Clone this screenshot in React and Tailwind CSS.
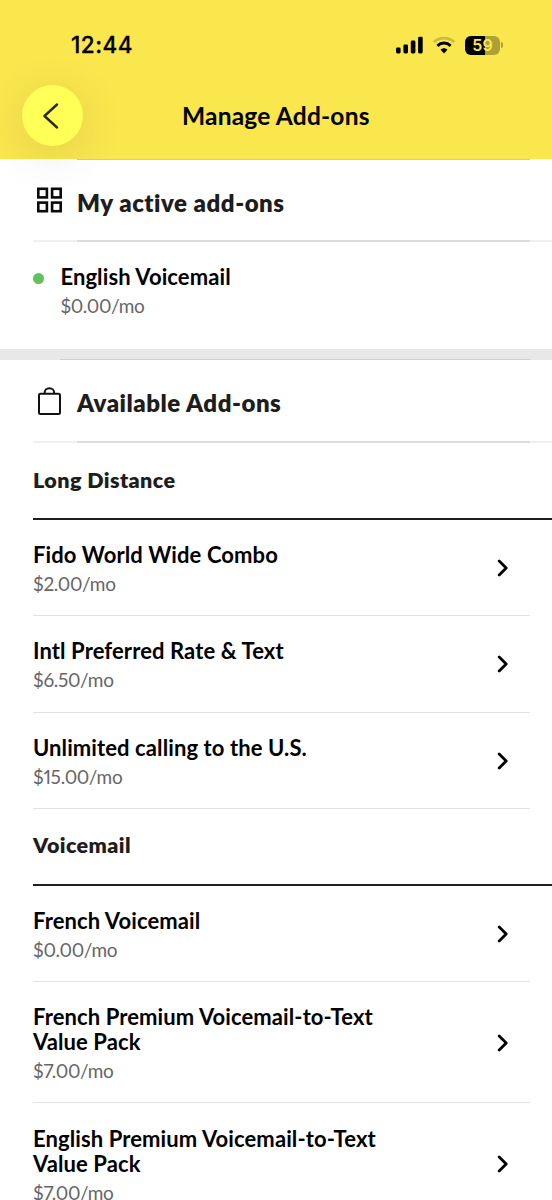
import clsx from 'clsx'

const addonGroups = [
  {
    title: 'Long Distance',
    items: [
      { name: 'Fido World Wide Combo', price: '$2.00/mo' },
      { name: 'Intl Preferred Rate & Text', price: '$6.50/mo' },
      { name: 'Unlimited calling to the U.S.', price: '$15.00/mo' },
    ],
  },
  {
    title: 'Voicemail',
    items: [
      { name: 'French Voicemail', price: '$0.00/mo' },
      { name: 'French Premium Voicemail-to-Text Value Pack', price: '$7.00/mo' },
      { name: 'English Premium Voicemail-to-Text Value Pack', price: '$7.00/mo' },
    ],
  },
]

const StatusBar = () => (
  <div className="flex h-[85px] items-start justify-between pt-[30px] pr-[49px] pl-[71px]">
    <span className="font-['Inter'] text-[22.5px] leading-[30px] font-medium tracking-[0.5px] text-black [-webkit-text-stroke:0.3px_black]">
      12:44
    </span>
    <div className="flex h-[30px] items-center">
      {/* Signal */}
      <svg width="28" height="18" viewBox="0 0 28 18">
        <rect x="1" y="11.5" width="4.6" height="6" rx="1.4" />
        <rect x="8.4" y="8.5" width="4.6" height="9" rx="1.4" />
        <rect x="15.8" y="4.5" width="4.6" height="13" rx="1.4" />
        <rect x="23.1" y="0.7" width="4.6" height="16.8" rx="1.4" />
      </svg>
      {/* Wifi */}
      <svg className="ml-[9px]" width="24" height="18" viewBox="0 0 24 18">
        <path d="M1.8 6C7.5 0.8 16.5 0.8 22.2 6" fill="none" stroke="#c9bc42" strokeWidth="2.8" />
        <path d="M5.4 9.8C9.2 6.2 14.8 6.2 18.6 9.8" fill="none" stroke="#000" strokeWidth="3" />
        <path d="M12 17.4L8.6 13.8C10.4 11.8 13.6 11.8 15.4 13.8Z" />
      </svg>
      {/* Battery */}
      <div className="relative ml-[9px] flex h-[19px] w-[35px] items-center justify-center overflow-hidden rounded-[6px] bg-[#ada036]">
        <div className="absolute inset-y-0 left-0 w-[20px] bg-black" />
        <span className="relative font-['Inter'] text-[16px] leading-none font-semibold text-[#fae64d]">59</span>
      </div>
      <div className="ml-px h-[6px] w-[2px] rounded-r-full bg-[#ada036]" />
    </div>
  </div>
)

const Header = () => (
  <header className="relative h-[159px] bg-[#fae64d]">
    <StatusBar />
    <div className="flex items-center pl-[22px]">
      <button className="flex h-[61px] w-[61px] items-center justify-center rounded-full bg-[#ffff57] shadow-[0_8px_44px_rgba(70,60,60,0.13)]">
        <svg width="16" height="26" viewBox="0 0 16 26" fill="none" stroke="#292a0e" strokeWidth="2.4" strokeLinecap="round" strokeLinejoin="round" className="-ml-[3px]">
          <path d="M14 1.5L1.5 13L14 24.5" />
        </svg>
      </button>
      <h1 className="ml-[99px] text-[24.5px] leading-[30px] font-bold tracking-[0.2px] text-black">Manage Add-ons</h1>
    </div>
  </header>
)

const SectionHeader = ({ icon, title, className }) => (
  <div className={clsx('flex items-start pt-[27px] pl-[33px]', className)}>
    <div className="w-[44px]">{icon}</div>
    <h2 className="text-[24px] leading-[32px] font-extrabold tracking-[0.52px] text-[#1d1d1d]">{title}</h2>
  </div>
)

// Two-tone divider: light from the margin, darker under the text
const Divider = () => (
  <div className="ml-[33px] h-[2px] bg-[#f0f0f0] pr-[22px] pl-[44px]">
    <div className="h-full bg-[#dcdcdc]" />
  </div>
)

const GridIcon = () => (
  <svg className="ml-[4px]" width="25" height="26" viewBox="0 0 25 26" fill="none" stroke="#0a0a0a" strokeWidth="2.6">
    <rect x="1.3" y="1.8" width="8.6" height="8.6" />
    <rect x="15.1" y="1.8" width="8.6" height="8.6" />
    <rect x="1.3" y="15.6" width="8.6" height="8.6" />
    <rect x="15.1" y="15.6" width="8.6" height="8.6" />
  </svg>
)

const BagIcon = () => (
  <svg className="ml-[5px]" width="23" height="28" viewBox="0 0 23 28" fill="none" stroke="#111" strokeWidth="2">
    <rect x="1" y="6.8" width="21" height="20.1" rx="1.5" />
    <path d="M6.7 6.8V5.6C6.7 3.2 8.6 1.3 11.4 1.3S16.1 3.2 16.1 5.6V6.8" />
  </svg>
)

const AddonText = ({ name, price }) => (
  <div>
    <p className="text-[22px] leading-[25px] font-bold tracking-[0.1px] text-black">{name}</p>
    <p className="mt-[4px] text-[19px] leading-[25px] tracking-[-0.3px] text-[#666] proportional-nums">{price}</p>
  </div>
)

const AddonRow = ({ item, tall }) => (
  <button
    className={clsx(
      'mr-[22px] ml-[33px] flex items-center justify-between border-b border-[#e2e2e2] pr-[22px] text-left',
      tall ? 'h-[121.3px]' : 'h-[96.3px]'
    )}
  >
    <div className="w-[360px] pt-[3px]">
      <AddonText name={item.name} price={item.price} />
    </div>
    <svg className="mt-px" width="11" height="18" viewBox="0 0 11 18" fill="none" stroke="#000" strokeWidth="2.8" strokeLinecap="round" strokeLinejoin="round">
      <path d="M2.2 2L9.2 9L2.2 16" />
    </svg>
  </button>
)

const App = () => (
  <div className="flex h-[1200px] w-[552px] flex-col overflow-hidden bg-white font-['Lato',sans-serif] *:shrink-0">
    <Header />
    <div className="mr-[22px] ml-[77px] h-px bg-[#d3ca9d]" />

    <SectionHeader className="h-[80px]" icon={<GridIcon />} title="My active add-ons" />
    <Divider />
    <div className="flex h-[107px] items-start pt-[22px] pl-[33px]">
      <span className="mt-[9px] mr-[16.4px] h-[11px] w-[11px] rounded-full bg-[#5fc35c]" />
      <AddonText name="English Voicemail" price="$0.00/mo" />
    </div>
    <div className="flex h-[11px] items-end bg-[#e8e8e8] pr-[22px] pl-[60px]">
      <div className="h-px w-full bg-[#cfcfcf]" />
    </div>

    <SectionHeader className="h-[81px]" icon={<BagIcon />} title="Available Add-ons" />
    <Divider />
    {addonGroups.map((group) => (
      <section key={group.title} className="flex flex-col">
        <div className="ml-[33px] flex h-[77px] items-center border-b-2 border-[#1f1f1f] pb-[2px]">
          <h3 className="text-[21.5px] leading-[26px] font-extrabold tracking-[0.4px] text-[#1d1d1d]">{group.title}</h3>
        </div>
        {group.items.map((item) => (
          <AddonRow key={item.name} item={item} tall={item.name.length > 32} />
        ))}
      </section>
    ))}
  </div>
)

export default App
